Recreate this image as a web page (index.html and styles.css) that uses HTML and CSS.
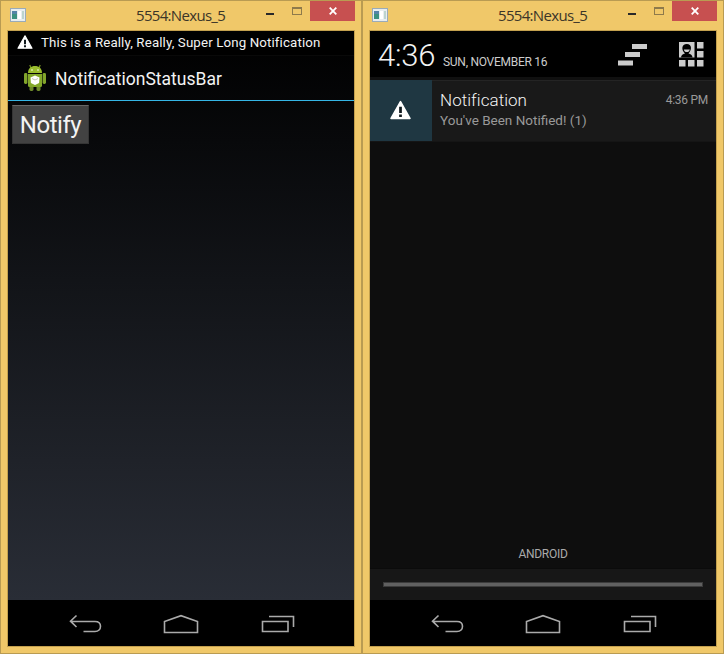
FILE: index.html
```
<!DOCTYPE html>
<html lang="en">
<head>
<meta charset="utf-8">
<title>5554:Nexus_5</title>
<link rel="stylesheet" href="styles.css">
</head>
<body>
<svg class="defs" width="0" height="0">
  <symbol id="app" viewBox="0 0 16 14">
    <rect x=".5" y=".5" width="15" height="13" fill="#e8edf0" stroke="#9aabb8"/>
    <rect x="2" y="3" width="5" height="8" fill="#3d9180"/>
    <path d="M2 3h5v3H2z" fill="#5584a7"/>
    <path d="M8 3h3v8H8z" fill="#fff"/>
    <path d="M12 3h2v8h-2z" fill="#bdd4ce"/>
  </symbol>
  <symbol id="warn" viewBox="0 0 20 18">
    <path d="M10 1 19 17H1z" fill="#fff" stroke="#fff" stroke-width="1.5" stroke-linejoin="round"/>
    <path d="M8.7 6h2.6v5.8H8.7zM8.7 13.2h2.6v2.4H8.7z" fill="#10191d"/>
  </symbol>
  <symbol id="back" viewBox="0 0 33 20">
    <path d="M7.5 1.5 1.5 7.2l6 5.8M2 7.5h24c3.400 0 5.500 2 5.500 4.800s-2 5.200-5.500 5.200H14.500" fill="none" stroke="#aaa" stroke-width="1.6"/>
  </symbol>
  <symbol id="home" viewBox="0 0 36 20">
    <path d="M1.500 18.500V7.500L18 1.700l16.500 5.800v11z" fill="none" stroke="#aaa" stroke-width="1.600"/>
  </symbol>
  <symbol id="recent" viewBox="0 0 34 18">
    <path d="M1.500 6.500h25.500v10H1.500zM8 1.500h24.500V12" fill="none" stroke="#aaa" stroke-width="1.600"/>
  </symbol>
</svg>
<main class="desktop">
  <section class="window">
    <header class="titlebar">
      <svg class="app-icon"><use href="#app"/></svg>
      <h1 class="title">5554:Nexus_5</h1>
      <span class="minimize"></span><span class="maximize"></span>
      <span class="close"><svg width="8" height="8" viewBox="0 0 8 8"><path d="M.7.7l6.600 6.600M7.300.7.7 7.300" stroke="#fff" stroke-width="1.800"/></svg></span>
    </header>
    <div class="screen app-screen">
      <div class="status">
        <svg class="status-warn"><use href="#warn"/></svg>
        <span class="ticker">This is a Really, Really, Super Long Notification</span>
      </div>
      <div class="action-bar">
        <svg class="droid" viewBox="0 0 24 28">
          <path d="M8 4 6.800 1M16 4l1.200-3" stroke="#718c24" stroke-width="1.200"/>
          <path d="M5 9C5 4.500 8 2 12 2s7 2.500 7 7z" fill="#9abd2e"/>
          <circle cx="9" cy="6" r=".8" fill="#fff"/><circle cx="15" cy="6" r=".8" fill="#fff"/>
          <rect x="1" y="9" width="3.400" height="11" rx="1.400" fill="#82a52b"/>
          <rect x="19.600" y="9" width="3.400" height="11" rx="1.400" fill="#82a52b"/>
          <rect x="6.500" y="19" width="4" height="8" rx="1.400" fill="#6e8a2b"/>
          <rect x="13.500" y="19" width="4" height="8" rx="1.400" fill="#6e8a2b"/>
          <path d="M5 10h14v11.500q0 1.500-1.500 1.500h-11Q5 23 5 21.500z" fill="#83a82a"/>
          <path d="m12 11.500 4.500 2-.4 5.500-4.100 2-4.100-2-.4-5.500z" fill="#fff"/>
          <path d="m9 14.500 3 1.500 3-1.500" stroke="#b3bd9d" stroke-width=".8" fill="none"/>
        </svg>
        <h2 class="app-name">NotificationStatusBar</h2>
      </div>
      <div class="content"><button class="notify">Notify</button></div>
      <nav class="nav">
        <svg class="back"><use href="#back"/></svg>
        <svg class="home"><use href="#home"/></svg>
        <svg class="recent"><use href="#recent"/></svg>
      </nav>
    </div>
  </section>
  <section class="window">
    <header class="titlebar">
      <svg class="app-icon"><use href="#app"/></svg>
      <h1 class="title">5554:Nexus_5</h1>
      <span class="minimize"></span><span class="maximize"></span>
      <span class="close"><svg width="8" height="8" viewBox="0 0 8 8"><path d="M.7.7l6.600 6.600M7.300.7.7 7.300" stroke="#fff" stroke-width="1.800"/></svg></span>
    </header>
    <div class="screen shade">
      <div class="shade-header">
        <span class="clock">4:36</span>
        <span class="date">SUN, NOVEMBER 16</span>
        <svg class="clear" viewBox="0 0 29 22" fill="#ccc"><path d="M14 0h15v5H14zM7 8h15v5H7zM0 16.500h15v5H0z"/></svg>
        <svg class="settings" viewBox="0 0 25 25">
          <path d="M0 0h15.500v15.500H0zM18 0h6.500v6.500H18zM18 9h6.500v6.500H18zM0 18h6.500v6.500H0zM9 18h6.500v6.500H9zM18 18h6.500v6.500H18z" fill="#ccc"/>
          <path d="M2 15.500c0-2.300 2-3.500 4-4C2 8 2.500 2 7.800 2S13 8 9.500 11.500c2 .5 4 1.700 4 4z" fill="#000"/>
          <path d="M4.800 7.500h6c-.4 3.400-5.600 3.400-6 0z" fill="#ccc"/>
        </svg>
      </div>
      <article class="notification">
        <div class="tile"><svg class="tile-warn"><use href="#warn"/></svg></div>
        <div class="message">
          <h2 class="heading">Notification</h2>
          <p class="body">You've Been Notified! (1)</p>
        </div>
        <time class="time">4:36 PM</time>
      </article>
      <div class="empty"><span class="carrier">ANDROID</span></div>
      <div class="handle"><span class="grip"></span></div>
      <nav class="nav">
        <svg class="back"><use href="#back"/></svg>
        <svg class="home"><use href="#home"/></svg>
        <svg class="recent"><use href="#recent"/></svg>
      </nav>
    </div>
  </section>
</main>
</body>
</html>
```
FILE: styles.css
```
* { box-sizing: border-box; }
body { margin: 0; font-family: Roboto, sans-serif; color: #f3f3f3; }
h1, h2, p { margin: 0; font-weight: 400; }
svg { display: block; flex: none; }
span, h1, h2, p, time { white-space: nowrap; }
.defs { position: absolute; }
.desktop { display: flex; width: 724px; height: 654px; }
.window { width: 362px; height: 654px; border: 1px solid #b99b52; background: #f0c869; padding: 0 6px 6px; }
.titlebar { display: flex; height: 29px; margin-right: -6px; }
.app-icon { width: 16px; height: 14px; margin: 7px 0 0 3px; }
.title { width: 90px; margin-left: 110px; font: 15px/29px "Open Sans", sans-serif; letter-spacing: -.68px; color: #3b3528; }
.minimize { width: 8px; height: 2px; margin: 12px 0 0 40px; background: #292929; }
.maximize { width: 10px; height: 8px; margin: 6px 0 0 18px; border: 1px solid #8e7a4b; border-top-width: 2px; }
.close { width: 45px; height: 20px; margin-left: 8px; background: #c75050; display: flex; align-items: center; justify-content: center; }
.screen { width: 348px; height: 617px; border: 1px solid #c3a04e; display: flex; flex-direction: column; background: #000; }
.app-screen { background: linear-gradient(#000 0, #08090b 110px, #292d36 569px); }
.status { height: 25px; display: flex; background: #000; border-bottom: 1px solid #090909; }
.status-warn { width: 16px; height: 14px; margin: 4px 0 0 9px; }
.ticker { margin-left: 8px; font-size: 13.3px; letter-spacing: .13px; line-height: 24px; }
.action-bar { height: 45px; display: flex; border-bottom: 1px solid #35b5e5; }
.droid { width: 24px; height: 28px; margin: 8px 0 0 15px; }
.app-name { margin-left: 8px; font-size: 17.5px; line-height: 46px; }
.content { flex: 1; padding: 4px; }
.notify { display: block; width: 77px; height: 39px; padding: 0; background: #424242; border: 1px solid #353535; border-top-color: #666; color: #f3f3f3; font: 24px/39px Roboto, sans-serif; letter-spacing: -.45px; }
.nav { height: 46px; display: flex; background: #000; }
.back { width: 33px; height: 20px; margin: 14px 0 0 61px; }
.home { width: 36px; height: 20px; margin: 14px 0 0 61px; }
.recent { width: 34px; height: 18px; margin: 15px 0 0 62px; }
.shade { background: #0e0e0e; }
.shade-header { height: 49px; display: flex; background: #000; border-bottom: 3px solid #101010; }
.clock { width: 57px; margin-left: 8px; font-size: 31px; font-weight: 300; line-height: 49px; letter-spacing: -.2px; }
.date { width: 106px; margin-left: 8px; font-size: 12px; line-height: 62px; letter-spacing: -.27px; color: #ccc; }
.clear { width: 29px; height: 22px; margin: 13px 0 0 69px; }
.settings { width: 25px; height: 25px; margin: 11px 0 0 32px; }
.notification { height: 62px; display: flex; background: #191919; border-top: 1px solid #242424; border-bottom: 1px solid #151515; }
.tile { width: 62px; background: #1f3742; padding: 20px 0 0 20px; margin-top: -1px; }
.tile-warn { width: 21px; height: 20px; }
.message { flex: 1; padding: 9px 0 0 8px; }
.heading { font-size: 17px; line-height: 20px; font-weight: 300; letter-spacing: .05px; }
.body { font-size: 13.5px; line-height: 21px; color: #999; }
.time { margin-right: 8px; font-size: 12px; line-height: 38px; letter-spacing: -.27px; color: #999; }
.empty { flex: 1; display: flex; align-items: flex-end; justify-content: center; padding-bottom: 4px; }
.carrier { font-size: 12px; line-height: 20px; letter-spacing: -.27px; color: #aaa; }
.handle { height: 32px; background: #171717; border-top: 1px solid #0b0b0b; padding: 13px 13px 0; }
.grip { display: block; height: 5px; background: #606060; border: 1px solid #3b3b3b; border-width: 1px; }
```
